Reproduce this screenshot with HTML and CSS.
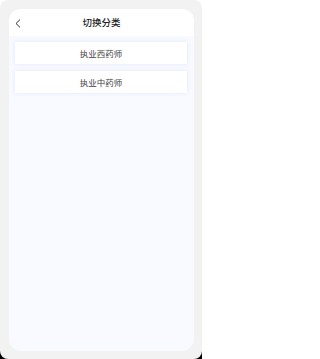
FILE: index.html
```html
<!DOCTYPE html>
<html lang="zh">
<head>
<meta charset="utf-8">
<link rel="stylesheet" href="styles.css">
</head>
<body>
<div class="screen">
  <div class="card">
    <div class="header">
      <span class="back">
        <svg width="6" height="9" viewBox="0 0 6 9"><path d="M5 0.6 L1 4.5 L5 8.4" fill="none" stroke="#333" stroke-width="1"/></svg>
      </span>
      <span class="title">切换分类</span>
    </div>
    <div class="list">
      <div class="item">执业西药师</div>
      <div class="item">执业中药师</div>
    </div>
  </div>
</div>
</body>
</html>
```
FILE: styles.css
```css
html {
  margin: 0;
  padding: 0;
  background: #ffffff;
}
body {
  margin: 0;
  padding: 0;
  width: 202px;
  height: 359px;
  background: linear-gradient(#ffffff 50%, #000000 50%);
  font-family: "Noto Sans CJK SC", "Noto Sans", sans-serif;
  overflow: hidden;
}
.screen {
  height: 359px;
  background: #f2f2f2;
  border-radius: 8px;
  padding: 9px 8px 8px 9px;
  box-sizing: border-box;
}
.card {
  height: 342px;
  border-radius: 12px;
  background: #f8faff;
  overflow: hidden;
}
.header {
  position: relative;
  height: 27px;
  background: #ffffff;
  display: flex;
  align-items: center;
  justify-content: center;
}
.back {
  position: absolute;
  left: 6px;
  top: 10px;
  display: flex;
}
.title {
  font-size: 9.5px;
  font-weight: 500;
  color: #222222;
  line-height: 1;
}
.list {
  display: flex;
  flex-direction: column;
  gap: 7px;
  padding: 6px 7px 0 6px;
}
.item {
  height: 22px;
  background: #ffffff;
  display: flex;
  align-items: center;
  justify-content: center;
  font-size: 8.5px;
  color: #444444;
  box-shadow: 0 0 4px rgba(190, 210, 245, 0.45);
}
```
